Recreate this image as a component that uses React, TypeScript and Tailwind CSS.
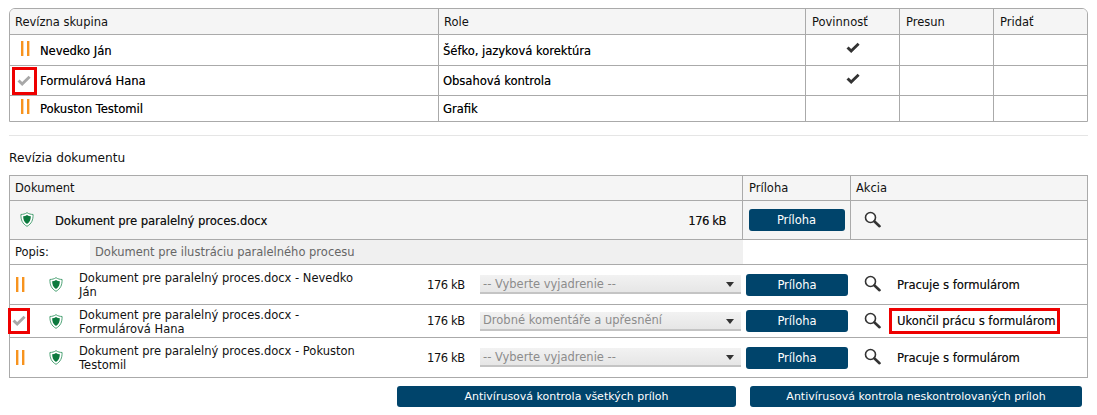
const font = "font-['DejaVu_Sans',sans-serif]";
const heavy = "[text-shadow:0.2px_0_0_#00000080]";

function PauseIcon() {
  return (
    <svg width="10" height="15" viewBox="0 0 10 15" className="shrink-0" aria-hidden="true">
      <rect x="1" y="0" width="2.4" height="15" fill="#f7931e" />
      <rect x="7" y="0" width="2.4" height="15" fill="#f7931e" />
    </svg>
  );
}

function CheckIcon({ color, size = 16 }: { color: string; size?: number }) {
  return (
    <svg width={size} height={size} viewBox="0 0 16 16" aria-hidden="true">
      <path d="M1.5 8.5 L3.6 6.4 L6.2 9 L12.6 2.8 L14.6 4.8 L6.2 13 Z" fill={color} />
    </svg>
  );
}

function ShieldIcon() {
  return (
    <svg width="14" height="15" viewBox="0 0 15 16" aria-hidden="true">
      <path d="M7.5 0.7 C9.5 2 11.7 2.6 14 2.6 C14.2 8.4 12.4 12.6 7.5 15.3 C2.6 12.6 0.8 8.4 1 2.6 C3.3 2.6 5.5 2 7.5 0.7 Z" fill="#fff" stroke="#3f9b6b" strokeWidth="1" />
      <path d="M7.5 3.2 C8.9 4 10.2 4.5 11.6 4.6 C11.6 8.2 10.6 10.9 7.5 12.9 C4.4 10.9 3.4 8.2 3.4 4.6 C4.8 4.5 6.1 4 7.5 3.2 Z" fill="#0c7a3e" />
    </svg>
  );
}

function SearchIcon() {
  return (
    <svg width="17" height="17" viewBox="0 0 17 17" aria-hidden="true">
      <circle cx="6.5" cy="6.5" r="5" fill="#fff" stroke="#333" strokeWidth="1.6" />
      <path d="M10.5 10.5 L15.5 15.2" stroke="#333" strokeWidth="2.6" strokeLinecap="round" />
    </svg>
  );
}

function SelectBox({ label }: { label: string }) {
  return (
    <div className="flex h-[19px] w-[261px] items-center justify-between border-b-2 border-[#c4c4c4] bg-gradient-to-b from-[#f2f2f2] to-[#e6e6e6] pl-[3px] pr-[7px] pt-[2px] text-[11.5px] text-[#8c8c8c]">
      <span>{label}</span>
      <span className="h-0 w-0 border-x-[4px] border-t-[5px] border-x-transparent border-t-[#333]" />
    </div>
  );
}

function Button({ label, className }: { label: string; className: string }) {
  return (
    <button type="button" className={`flex items-center justify-center rounded-[3px] bg-[#00446b] pt-[2px] text-white ${className}`}>
      {label}
    </button>
  );
}

const people = [
  { name: "Nevedko Ján", role: "Šéfko, jazyková korektúra", done: false, required: true, height: "h-[31px]" },
  { name: "Formulárová Hana", role: "Obsahová kontrola", done: true, required: true, height: "h-[30px]" },
  { name: "Pokuston Testomil", role: "Grafik", done: false, required: false, height: "h-[25px]" },
];

const documents = [
  { title: "Dokument pre paralelný proces.docx - Nevedko Ján", comment: "-- Vyberte vyjadrenie --", status: "Pracuje s formulárom", done: false, height: "h-[40px]" },
  { title: "Dokument pre paralelný proces.docx - Formulárová Hana", comment: "Drobné komentáře a upřesnění", status: "Ukončil prácu s formulárom", done: true, height: "h-[33px]" },
  { title: "Dokument pre paralelný proces.docx - Pokuston Testomil", comment: "-- Vyberte vyjadrenie --", status: "Pracuje s formulárom", done: false, height: "h-[39px]" },
];

function GroupTable() {
  return (
    <div className="overflow-hidden rounded-t-[6px] border border-[#aaaaaa] text-[11.5px]">
      <div className="flex h-[26px] items-center border-b border-[#aaaaaa] bg-[#f5f5f5] text-[#111]">
        <div className="flex h-full w-[429px] items-center border-r border-[#aaaaaa] pl-[5px] pt-[2px]">Revízna skupina</div>
        <div className="flex h-full w-[367px] items-center border-r border-[#aaaaaa] pl-[5px] pt-[2px]">Role</div>
        <div className="flex h-full w-[94px] items-center border-r border-[#aaaaaa] pl-[6px] pt-[2px]">Povinnosť</div>
        <div className="flex h-full w-[94px] items-center border-r border-[#aaaaaa] pl-[6px] pt-[2px]">Presun</div>
        <div className="flex h-full flex-1 items-center pl-[6px] pt-[2px]">Pridať</div>
      </div>
      {people.map((p, i) => (
        <div key={p.name} className={`flex items-center ${p.height} ${i < people.length - 1 ? "border-b border-[#aaaaaa]" : ""} text-black`}>
          <div className="flex h-full w-[429px] items-center border-r border-[#aaaaaa]">
            <div className="flex w-[30px] items-center justify-center">
              {p.done ? (
                <div className="flex h-[28px] w-[25px] -translate-x-px items-center justify-center border-[3px] border-[#ee0000]">
                  <CheckIcon color="#a8a8a8" />
                </div>
              ) : (
                <div className="-translate-y-[2px]"><PauseIcon /></div>
              )}
            </div>
            <span className={`pt-[3px] ${heavy}`}>{p.name}</span>
          </div>
          <div className={`flex h-full w-[367px] items-center border-r border-[#aaaaaa] pl-[4px] pt-[3px] ${heavy}`}>{p.role}</div>
          <div className="flex h-full w-[94px] items-start justify-center border-r border-[#aaaaaa] pt-[5px]">
            {p.required && <CheckIcon color="#333" />}
          </div>
          <div className="h-full w-[94px] border-r border-[#aaaaaa]" />
          <div className="h-full flex-1" />
        </div>
      ))}
    </div>
  );
}

function DocumentTable() {
  return (
    <div className="border border-[#aaaaaa] text-[11.5px] text-[#111]">
      <div className="flex h-[25px] items-center border-b border-[#aaaaaa] bg-[#f5f5f5]">
        <div className="flex h-full w-[733px] items-center border-r border-[#aaaaaa] pl-[5px] pt-[2px]">Dokument</div>
        <div className="flex h-full w-[108px] items-center border-r border-[#aaaaaa] pl-[6px] pt-[2px]">Príloha</div>
        <div className="flex h-full flex-1 items-center pl-[5px] pt-[2px]">Akcia</div>
      </div>
      <div className="flex h-[39px] items-center border-b border-[#aaaaaa] bg-[#f5f5f5]">
        <div className="flex h-full w-[733px] items-center border-r border-[#aaaaaa]">
          <div className="ml-[10px] w-[35px] -translate-y-px"><ShieldIcon /></div>
          <span className={`flex-1 pt-[3px] ${heavy}`}>Dokument pre paralelný proces.docx</span>
          <span className={`pr-[16px] pt-[3px] tracking-[-0.4px] ${heavy}`}>176 kB</span>
        </div>
        <div className="flex h-full w-[108px] items-center justify-center border-r border-[#aaaaaa]">
          <Button label="Príloha" className="h-[22px] w-[96px] text-[11.5px]" />
        </div>
        <div className="-translate-y-px pl-[13px]"><SearchIcon /></div>
      </div>
      <div className="flex h-[25px] items-center border-b border-[#aaaaaa]">
        <div className="w-[80px] pl-[5px] pt-[2px]">Popis:</div>
        <div className="flex h-full w-[653px] items-center bg-[#f0f0f0] pl-[5px] pt-[2px] text-[#666]">Dokument pre ilustráciu paralelného procesu</div>
      </div>
      {documents.map((d, i) => (
        <div key={d.status + i} className={`flex items-center ${d.height} ${i < documents.length - 1 ? "border-b border-[#aaaaaa]" : ""}`}>
          <div className="flex w-[30px] justify-start pl-[5px]">
            {d.done ? (
              <div className="flex h-[26px] w-[22px] -translate-x-[7px] items-center justify-center border-[3px] border-[#ee0000]">
                <CheckIcon color="#a8a8a8" />
              </div>
            ) : (
              <PauseIcon />
            )}
          </div>
          <div className="w-[39px] pl-[9px]"><ShieldIcon /></div>
          <div className="w-[348px] pr-[65px] pt-[1px] leading-[14px]">{d.title}</div>
          <div className="w-[53px] pt-[2px] tracking-[-0.4px]">176 kB</div>
          <SelectBox label={d.comment} />
          <Button label="Príloha" className="ml-[5px] h-[22px] w-[102px] text-[11.5px]" />
          <div className="ml-[16px] w-[33px] -translate-y-px"><SearchIcon /></div>
          {d.done ? (
            <div className={`ml-[-8px] flex h-[26px] w-[171px] items-center border-[3px] border-[#ee0000] pl-[5px] pt-[2px] ${heavy}`}>{d.status}</div>
          ) : (
            <div className={`pt-[2px] ${heavy}`}>{d.status}</div>
          )}
        </div>
      ))}
    </div>
  );
}

export default function App() {
  return (
    <div className={`${font} w-[1097px] bg-white px-[9px] pt-[8px] text-black`}>
      <div className="w-[1079px]">
        <GroupTable />
        <hr className="mt-[13px] border-t border-[#e5e5e5]" />
        <h2 className="mt-[13px] h-[26px] text-[12.2px] text-[#111]">Revízia dokumentu</h2>
        <DocumentTable />
        <div className="mt-[8px] flex justify-end gap-[14px] pr-[6px]">
          <Button label="Antivírusová kontrola všetkých príloh" className="h-[21px] w-[339px] text-[11px]" />
          <Button label="Antivírusová kontrola neskontrolovaných príloh" className="h-[21px] w-[332px] text-[11px]" />
        </div>
      </div>
    </div>
  );
}
